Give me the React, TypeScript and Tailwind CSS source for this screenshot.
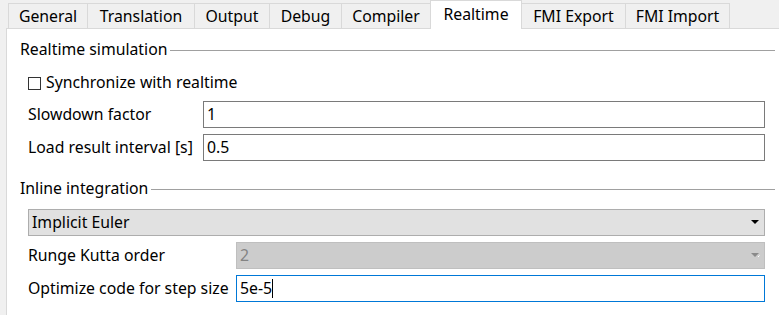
import React from "react";

const tabs = [
  { label: "General", w: "w-[79px]" },
  { label: "Translation", w: "w-[107px]" },
  { label: "Output", w: "w-[75px]" },
  { label: "Debug", w: "w-[72px]" },
  { label: "Compiler", w: "w-[89px]" },
  { label: "Realtime", w: "w-[92px]", active: true },
  { label: "FMI Export", w: "w-[103px]" },
  { label: "FMI Import", w: "w-[105px]" },
];

function GroupTitle({ title }: { title: string }) {
  return (
    <div className="flex items-center h-[20px]">
      <span>{title}</span>
      <div className="flex-1 h-px bg-[#a0a0a0] ml-[3px]" />
    </div>
  );
}

function Arrow({ disabled }: { disabled?: boolean }) {
  return (
    <svg width="9" height="5" viewBox="0 0 9 5" className="mr-[4px]">
      <path d="M0 0H8L4 4Z" fill={disabled ? "#8a8a8a" : "#000"} />
      {disabled && <path d="M7 4L8.5 2.5" stroke="#fff" strokeWidth="1" />}
    </svg>
  );
}

export default function App() {
  return (
    <div
      className="w-[779px] h-[315px] overflow-hidden bg-[#f0f0f0] flex flex-col text-[15.8px] text-black"
      style={{ fontFamily: '"Noto Sans", "Open Sans", sans-serif' }}
    >
      {/* tab bar */}
      <div className="relative z-10 flex items-end h-[28px] pl-[8px]">
        {tabs.map((t, i) =>
          t.active ? (
            <div
              key={t.label}
              className={`${t.w} h-[29px] -mb-px bg-white border border-b-0 border-[#d9d9d9] flex items-center justify-center`}
            >
              {t.label}
            </div>
          ) : (
            <div
              key={t.label}
              className={`${t.w} h-[25px] pt-[2px] bg-[#f0f0f0] border-t border-[#d9d9d9] flex items-center justify-center ${
                tabs[i - 1]?.active ? "" : "border-l"
              } ${i === tabs.length - 1 ? "border-r" : ""}`}
            >
              {t.label}
            </div>
          )
        )}
      </div>

      {/* panel */}
      <div className="flex-1 ml-[6px] bg-white border-t border-l border-[#d9d9d9] pl-[13px] pr-[4px] pt-[11px]">
        <GroupTitle title="Realtime simulation" />
        <div className="pl-[8px] pr-[10px]">
          <div className="flex items-center h-[20px] mt-[13px] gap-[5px]">
            <div className="w-[13px] h-[13px] border border-[#333]" />
            <span>Synchronize with realtime</span>
          </div>
          <div className="flex items-center mt-[8px]">
            <span className="w-[175px]">Slowdown factor</span>
            <div className="flex-1 h-[27px] border border-[#7a7a7a] flex items-center pl-[3px]">1</div>
          </div>
          <div className="flex items-center mt-[6px]">
            <span className="w-[175px]">Load result interval [s]</span>
            <div className="flex-1 h-[27px] border border-[#7a7a7a] flex items-center pl-[3px]">0.5</div>
          </div>
        </div>

        <div className="mt-[18px]">
          <GroupTitle title="Inline integration" />
        </div>
        <div className="pl-[8px] pr-[10px]">
          <div className="mt-[10px] h-[27px] bg-[#e1e1e1] border border-[#adadad] flex items-center justify-between pl-[3px]">
            <span>Implicit Euler</span>
            <Arrow />
          </div>
          <div className="flex items-center mt-[6px]">
            <span className="w-[208px]">Runge Kutta order</span>
            <div className="flex-1 h-[27px] bg-[#cccccc] border border-[#bfbfbf] flex items-center justify-between pl-[3px] text-[#838383]">
              <span>2</span>
              <Arrow disabled />
            </div>
          </div>
          <div className="flex items-center mt-[6px]">
            <span className="w-[208px] whitespace-nowrap">Optimize code for step size</span>
            <div className="flex-1 h-[27px] border border-[#0078d7] flex items-center pl-[3px]">
              <span>5e-5</span>
              <span className="w-px h-[19px] bg-black" />
            </div>
          </div>
        </div>
      </div>
    </div>
  );
}
